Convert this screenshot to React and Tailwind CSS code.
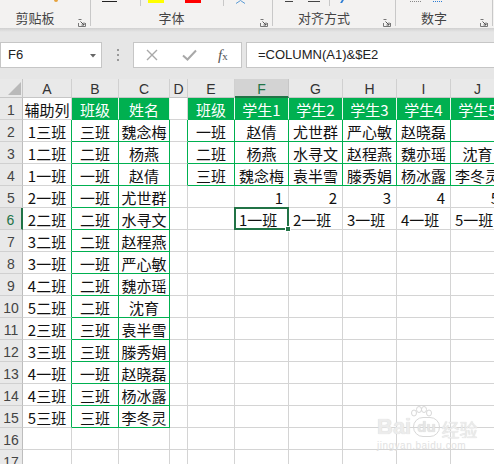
import React from 'react';

const rows = [
  ['辅助列', '班级', '姓名', '', '班级', '学生1', '学生2', '学生3', '学生4', '学生5'],
  ['1三班', '三班', '魏念梅', '', '一班', '赵倩', '尤世群', '严心敏', '赵晓磊', ''],
  ['1二班', '二班', '杨燕', '', '二班', '杨燕', '水寻文', '赵程燕', '魏亦瑶', '沈育'],
  ['1一班', '一班', '赵倩', '', '三班', '魏念梅', '袁半雪', '滕秀娟', '杨冰露', '李冬灵'],
  ['2一班', '一班', '尤世群', '', '', '1', '2', '3', '4', '5'],
  ['2二班', '二班', '水寻文', '', '', '1一班', '2一班', '3一班', '4一班', '5一班'],
  ['3二班', '二班', '赵程燕'],
  ['3一班', '一班', '严心敏'],
  ['4二班', '二班', '魏亦瑶'],
  ['5二班', '二班', '沈育'],
  ['2三班', '三班', '袁半雪'],
  ['3三班', '三班', '滕秀娟'],
  ['4一班', '一班', '赵晓磊'],
  ['4三班', '三班', '杨冰露'],
  ['5三班', '三班', '李冬灵'],
  [],
  [],
];

const letters = ['A', 'B', 'C', 'D', 'E', 'F', 'G', 'H', 'I', 'J'];

function cellClass(r, c) {
  const fill = r === 1 && (c === 1 || c === 2 || c >= 4);
  const inG = (r >= 2 && r <= 15 && (c === 1 || c === 2)) || (r >= 2 && r <= 4 && c >= 4);
  const leftOfG = (c === 0 && r >= 2 && r <= 15) || (c === 3 && r >= 2 && r <= 4);
  let cls =
    'relative h-[22px] flex items-center leading-none pt-[2px] border-r border-b overflow-hidden whitespace-nowrap text-[15px] ';
  if (fill) cls += 'bg-[#00b050] text-white border-r-[#e8f7ee] border-b-[#00b050] ';
  else if (inG) cls += 'text-[#111111] border-r-[#00b050] border-b-[#00b050] ';
  else if (leftOfG) cls += 'text-[#111111] border-r-[#00b050] border-b-[#d4d4d4] ';
  else cls += 'text-[#111111] border-r-[#d4d4d4] border-b-[#d4d4d4] ';
  if (r === 5 && c >= 5) cls += 'justify-end pr-[5px] ';
  else if (r === 6 && c >= 5) cls += 'justify-start pl-[4px] ';
  else cls += 'justify-center ';
  return cls;
}

function Launcher() {
  return (
    <svg width="8" height="8" viewBox="0 0 8 8" className="absolute right-[4px] top-[19px]">
      <path d="M0.5 4 V7.5 H7.5 V4" fill="none" stroke="#777" strokeWidth="1" />
      <path d="M0.5 0.5 H3.5" fill="none" stroke="#777" strokeWidth="1" />
      <path d="M2.5 2.5 L6 6 M6 3.5 V6 H3.5" fill="none" stroke="#555" strokeWidth="1" />
    </svg>
  );
}

function Group({ w, label }) {
  return (
    <div
      className={`relative h-full flex items-end justify-center pr-[20px] pb-[3px] ${w}`}
    >
      <span className="text-[13px] leading-[15px] text-[#444] font-['Noto_Sans_CJK_SC',sans-serif]">
        {label}
      </span>
      <Launcher />
    </div>
  );
}

function Sep() {
  return <div className="w-px h-[26px] bg-[#c8c8c8] shrink-0" />;
}

export default function App() {
  return (
    <div className="relative w-[494px] h-[464px] overflow-hidden bg-white font-['Noto_Sans_CJK_SC',sans-serif]">
      {/* Ribbon */}
      <div className="relative h-[28px] bg-[#f3f2f1] flex">
        <Group w="w-[90px]" label="剪贴板" />
        <Sep />
        <Group w="w-[181px]" label="字体" />
        <Sep />
        <Group w="w-[122px]" label="对齐方式" />
        <Sep />
        <Group w="w-[96px]" label="数字" />
        <Sep />
        {/* cut-off icon fragments at top */}
        <div className="absolute left-[54px] top-0 w-[4px] h-[2px] bg-[#e6a23c] rounded-b" />
        <div className="absolute left-[102px] top-[1px] w-[15px] h-px bg-[#222]" />
        <div className="absolute left-[140px] top-0 w-px h-[6px] bg-[#c8c8c8]" />
        <div className="absolute left-[148px] top-0 w-[16px] h-[3px] bg-[#ffff00]" />
        <div className="absolute left-[185px] top-0 w-[16px] h-[3px] bg-[#ff0000]" />
        <div className="absolute left-[223px] top-0 w-px h-[6px] bg-[#c8c8c8]" />
        <svg className="absolute left-[235px] top-0" width="11" height="4" viewBox="0 0 11 4">
          <path d="M1 3.5 L5.5 0.5 L10 3.5" fill="none" stroke="#5b9bd5" strokeWidth="1" />
        </svg>
        <div className="absolute left-[285px] top-[1px] w-[8px] h-px bg-[#444]" />
        <div className="absolute left-[308px] top-[1px] w-[12px] h-px bg-[#444]" />
        <div className="absolute left-[329px] top-0 w-px h-[6px] bg-[#c8c8c8]" />
        <div className="absolute left-[341px] top-0 w-[2px] h-[3px] bg-[#2b7cd3] skew-x-[-30deg]" />
        <div className="absolute left-[410px] top-0 w-[11px] h-[2px] border-b border-dotted border-[#888]" />
        <div className="absolute left-[433px] top-0 w-[9px] h-[2px] border-b border-dotted border-[#2b7cd3]" />
      </div>
      <div className="h-[4px] bg-gradient-to-b from-[#d0d0d0] to-[#e6e6e6]" />

      {/* Formula bar */}
      <div className="bg-[#e6e6e6] pt-[10px] pb-[11px]">
        <div className="flex items-center h-[26px]">
          <div className="relative w-[102px] h-full bg-white border border-[#c6c6c6] flex items-center pl-[7px]">
            <span className="text-[13px] text-[#222] font-['Liberation_Sans',Arial,sans-serif]">F6</span>
            <svg className="absolute left-[89px] top-[11px]" width="6" height="4" viewBox="0 0 6 4">
              <path d="M0 0 H6 L3 3.5 Z" fill="#666" />
            </svg>
          </div>
          <div className="w-[31px] h-full flex flex-col items-center justify-center gap-[3px]">
            <div className="w-[2px] h-[2px] bg-[#999]" />
            <div className="w-[2px] h-[2px] bg-[#999]" />
            <div className="w-[2px] h-[2px] bg-[#999]" />
          </div>
          <div className="w-[109px] h-full bg-white border border-[#c6c6c6] flex items-center">
            <svg className="ml-[12px]" width="12" height="12" viewBox="0 0 12 12">
              <path d="M1 1 L11 11 M11 1 L1 11" stroke="#a8a8a8" strokeWidth="1.4" />
            </svg>
            <svg className="ml-[24px]" width="15" height="12" viewBox="0 0 15 12">
              <path d="M1 6.5 L5.5 10.5 L14 1.5" fill="none" stroke="#a8a8a8" strokeWidth="2" />
            </svg>
            <span className="ml-[21px] italic text-[15px] leading-none text-[#555] font-['Liberation_Serif',serif]">
              f<span className="text-[11px] not-italic font-['Liberation_Serif',serif] italic">x</span>
            </span>
          </div>
          <div className="ml-[4px] flex-1 h-full bg-white border border-[#c6c6c6] border-r-0 flex items-center pl-[11px]">
            <span className="text-[13px] text-[#222] font-['Liberation_Sans',Arial,sans-serif]">
              =COLUMN(A1)&amp;$E2
            </span>
          </div>
        </div>
      </div>

      {/* Sheet */}
      <div className="grid grid-cols-[23px_49px_47px_51px_18px_47px_54px_54px_54px_54px_54px] w-[505px]">
        {/* header row */}
        <div className="relative h-[19px] bg-[#e9e9e9] border-r border-b border-[#c6c6c6]">
          <svg className="absolute left-[8px] top-[3px]" width="13" height="13" viewBox="0 0 13 13">
            <path d="M13 0 V13 H0 Z" fill="#b9b9b9" />
          </svg>
        </div>
        {letters.map((l, i) =>
          i === 5 ? (
            <div
              key={l}
              className="h-[19px] bg-[#d3d3d3] border-r border-r-[#c6c6c6] border-b-2 border-b-[#217346] flex items-center justify-center pt-[2px] text-[14px] leading-none text-[#217346] font-['Liberation_Sans',Arial,sans-serif]"
            >
              {l}
            </div>
          ) : (
            <div
              key={l}
              className="h-[19px] bg-[#e9e9e9] border-r border-r-[#d0d0d0] border-b border-b-[#c6c6c6] flex items-center justify-center pt-[2px] text-[14px] leading-none text-[#333] font-['Liberation_Sans',Arial,sans-serif]"
            >
              {l}
            </div>
          )
        )}
        {rows.map((row, ri) => {
          const r = ri + 1;
          return (
            <React.Fragment key={r}>
              {r === 6 ? (
                <div className="h-[22px] bg-[#e1e1e1] border-r-2 border-r-[#217346] border-b border-b-[#d0d0d0] flex items-center justify-center pt-[3px] text-[14px] leading-none text-[#217346] font-['Liberation_Sans',Arial,sans-serif]">
                  {r}
                </div>
              ) : (
                <div className="h-[22px] bg-[#e9e9e9] border-r border-r-[#bdbdbd] border-b border-b-[#d0d0d0] flex items-center justify-center pt-[3px] text-[14px] leading-none text-[#444] font-['Liberation_Sans',Arial,sans-serif]">
                  {r}
                </div>
              )}
              {letters.map((l, c) => (
                <div key={l} className={cellClass(r, c) + (r === 6 && c === 5 ? 'overflow-visible z-10' : '')}>
                  {row[c] || ''}
                  {r === 6 && c === 5 && (
                    <div className="absolute -left-px -top-px w-[55px] h-[23px] border-2 border-[#217346] pointer-events-none">
                      <div className="absolute -right-[4px] -bottom-[4px] w-[6px] h-[6px] bg-[#217346] border border-white" />
                    </div>
                  )}
                </div>
              ))}
            </React.Fragment>
          );
        })}
      </div>

      {/* watermark */}
      <div className="absolute left-[377px] top-[406px] pointer-events-none select-none">
        <div className="relative flex items-end gap-[2px] h-[32px]">
          <span className="text-[22px] leading-none font-bold text-[#ececec] font-['Liberation_Sans',Arial,sans-serif] [text-shadow:0_0_1px_#cfcfcf]">
            Bai
          </span>
          <span className="mb-[1px] px-[3px] rounded-full border border-[#d8d8d8] text-[15px] leading-[18px] font-bold text-[#e6e6e6] font-['Liberation_Sans',Arial,sans-serif] [text-shadow:0_0_1px_#cfcfcf]">
            du
          </span>
          <span className="text-[18px] leading-none text-[#ececec] [text-shadow:0_0_1px_#cfcfcf]">经验</span>
          <svg className="absolute left-[33px] top-0" width="22" height="14" viewBox="0 0 22 14">
            <ellipse cx="4" cy="7" rx="2.5" ry="3" fill="none" stroke="#d8d8d8" />
            <ellipse cx="9" cy="3.5" rx="2.5" ry="3" fill="none" stroke="#d8d8d8" />
            <ellipse cx="14" cy="3.5" rx="2.5" ry="3" fill="none" stroke="#d8d8d8" />
            <ellipse cx="19" cy="7" rx="2.5" ry="3" fill="none" stroke="#d8d8d8" />
          </svg>
        </div>
        <div className="text-[10px] leading-none mt-[3px] text-[#e2e2e2] font-['Liberation_Sans',Arial,sans-serif] tracking-[0.5px]">
          jingyan.baidu.com
        </div>
      </div>
    </div>
  );
}
